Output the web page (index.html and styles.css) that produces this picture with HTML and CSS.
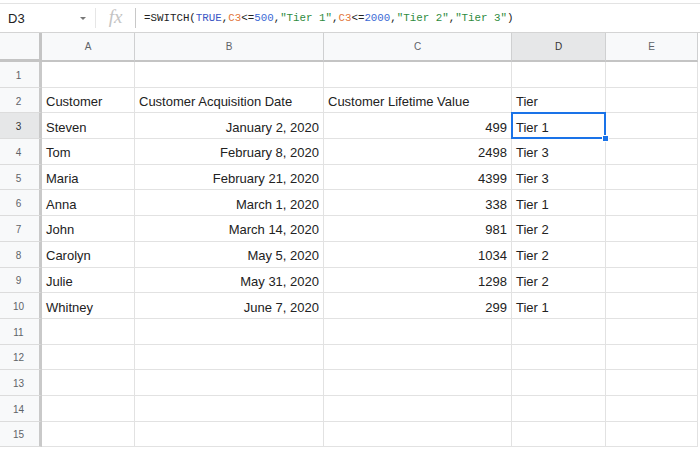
FILE: index.html
```html
<!DOCTYPE html>
<html>
<head>
<meta charset="utf-8">
<link rel="stylesheet" href="styles.css">
</head>
<body>
<div class="app">
  <div class="formula-bar">
    <div class="name-box"><span class="name">D3</span><span class="caret"></span></div>
    <div class="fx-box"><span class="fx">fx</span></div>
    <div class="formula"><span class="t">=SWITCH(</span><span class="b">TRUE</span><span class="t">,</span><span class="r">C3</span><span class="t">&lt;=</span><span class="n">500</span><span class="t">,</span><span class="s">"Tier 1"</span><span class="t">,</span><span class="r">C3</span><span class="t">&lt;=</span><span class="n">2000</span><span class="t">,</span><span class="s">"Tier 2"</span><span class="t">,</span><span class="s">"Tier 3"</span><span class="t">)</span></div>
  </div>
  <div class="sheet">
    <div class="row head">
      <div class="corner"></div>
      <div class="ch">A</div>
      <div class="ch">B</div>
      <div class="ch">C</div>
      <div class="ch sel">D</div>
      <div class="ch">E</div>
    </div>
    <div class="row"><div class="rh">1</div><div class="c"></div><div class="c"></div><div class="c"></div><div class="c"></div><div class="c"></div></div>
    <div class="row"><div class="rh">2</div><div class="c">Customer</div><div class="c">Customer Acquisition Date</div><div class="c">Customer Lifetime Value</div><div class="c">Tier</div><div class="c"></div></div>
    <div class="row"><div class="rh sel">3</div><div class="c">Steven</div><div class="c num">January 2, 2020</div><div class="c num">499</div><div class="c active">Tier 1<span class="handle"></span></div><div class="c"></div></div>
    <div class="row"><div class="rh">4</div><div class="c">Tom</div><div class="c num">February 8, 2020</div><div class="c num">2498</div><div class="c">Tier 3</div><div class="c"></div></div>
    <div class="row"><div class="rh">5</div><div class="c">Maria</div><div class="c num">February 21, 2020</div><div class="c num">4399</div><div class="c">Tier 3</div><div class="c"></div></div>
    <div class="row"><div class="rh">6</div><div class="c">Anna</div><div class="c num">March 1, 2020</div><div class="c num">338</div><div class="c">Tier 1</div><div class="c"></div></div>
    <div class="row"><div class="rh">7</div><div class="c">John</div><div class="c num">March 14, 2020</div><div class="c num">981</div><div class="c">Tier 2</div><div class="c"></div></div>
    <div class="row"><div class="rh">8</div><div class="c">Carolyn</div><div class="c num">May 5, 2020</div><div class="c num">1034</div><div class="c">Tier 2</div><div class="c"></div></div>
    <div class="row"><div class="rh">9</div><div class="c">Julie</div><div class="c num">May 31, 2020</div><div class="c num">1298</div><div class="c">Tier 2</div><div class="c"></div></div>
    <div class="row"><div class="rh">10</div><div class="c">Whitney</div><div class="c num">June 7, 2020</div><div class="c num">299</div><div class="c">Tier 1</div><div class="c"></div></div>
    <div class="row"><div class="rh">11</div><div class="c"></div><div class="c"></div><div class="c"></div><div class="c"></div><div class="c"></div></div>
    <div class="row"><div class="rh">12</div><div class="c"></div><div class="c"></div><div class="c"></div><div class="c"></div><div class="c"></div></div>
    <div class="row"><div class="rh">13</div><div class="c"></div><div class="c"></div><div class="c"></div><div class="c"></div><div class="c"></div></div>
    <div class="row"><div class="rh">14</div><div class="c"></div><div class="c"></div><div class="c"></div><div class="c"></div><div class="c"></div></div>
    <div class="row"><div class="rh">15</div><div class="c"></div><div class="c"></div><div class="c"></div><div class="c"></div><div class="c"></div></div>
  </div>
</div>
</body>
</html>
```

FILE: styles.css
```css
* { box-sizing: border-box; }
html, body { margin: 0; padding: 0; background: #fff; }
body { font-family: "Liberation Sans", Arial, sans-serif; color: #222; overflow: hidden; }

.app { width: 700px; height: 450px; padding-top: 3px; }

.formula-bar {
  display: flex;
  align-items: center;
  height: 30px;
  border-top: 1px solid #e3e3e3;
  border-bottom: 1px solid #d4d4d4;
}
.name-box {
  width: 95px;
  height: 100%;
  display: flex;
  align-items: center;
  justify-content: space-between;
  padding: 0 8px 0 8px;
}
.name { font-size: 13px; color: #222; }
.caret {
  width: 0; height: 0;
  border-left: 3px solid transparent;
  border-right: 3px solid transparent;
  border-top: 3px solid #777;
  margin-right: 1px;
}
.fx-box {
  width: 41px;
  height: 20px;
  display: flex;
  align-items: center;
  justify-content: center;
  border-left: 1px solid #e6e6e6;
  border-right: 1px solid #c8c8c8;
}
.fx {
  font-family: "Liberation Serif", serif;
  font-style: italic;
  font-size: 19px;
  color: #c4c4c4;
  line-height: 1;
  margin-top: -3px;
}
.formula {
  padding-left: 8px;
  font-family: "Liberation Mono", monospace;
  font-size: 10.8px;
  white-space: nowrap;
}
.formula .t { color: #222; }
.formula .b { color: #3c57c4; }
.formula .r { color: #e2763a; }
.formula .n { color: #3d6ad6; }
.formula .s { color: #2e8b3e; }

.sheet { width: 698px; }
.row {
  display: grid;
  grid-template-columns: 42px 93px 189px 188px 94px 92px;
  height: 25.7px;
}
.row.head { height: 29px; }

.corner {
  background: #f8f9fa;
  border-right: 3px solid #c4c4c4;
  border-bottom: 3px solid #c4c4c4;
}
.ch {
  background: #f8f9fa;
  border-right: 1px solid #cfd0d1;
  border-bottom: 2px solid #c4c4c4;
  display: flex;
  align-items: center;
  justify-content: center;
  font-size: 10px;
  color: #5f6368;
}
.ch.sel { background: #e6e7e8; color: #333; }

.rh {
  background: #f8f9fa;
  border-right: 3px solid #c9c9c9;
  border-bottom: 1px solid #dcdcdc;
  display: flex;
  align-items: center;
  justify-content: center;
  font-size: 10px;
  color: #5f6368;
  padding: 2px 2px 0 0;
}
.rh.sel { background: #e6e7e8; color: #333; }

.c {
  border-right: 1px solid #e2e2e2;
  border-bottom: 1px solid #e2e2e2;
  display: flex;
  align-items: center;
  padding: 3px 4px 0 4px;
  font-size: 13px;
  white-space: nowrap;
  overflow: visible;
}
.c.num { justify-content: flex-end; }

.c.active { position: relative; }
.c.active::after {
  content: "";
  position: absolute;
  left: -1px; top: -1px; right: -1px; bottom: -1px;
  border: 2px solid #1a73e8;
  pointer-events: none;
}
.handle {
  position: absolute;
  right: -4px;
  bottom: -4px;
  width: 7px;
  height: 7px;
  background: #1a73e8;
  border: 1px solid #fff;
  z-index: 2;
}
```
